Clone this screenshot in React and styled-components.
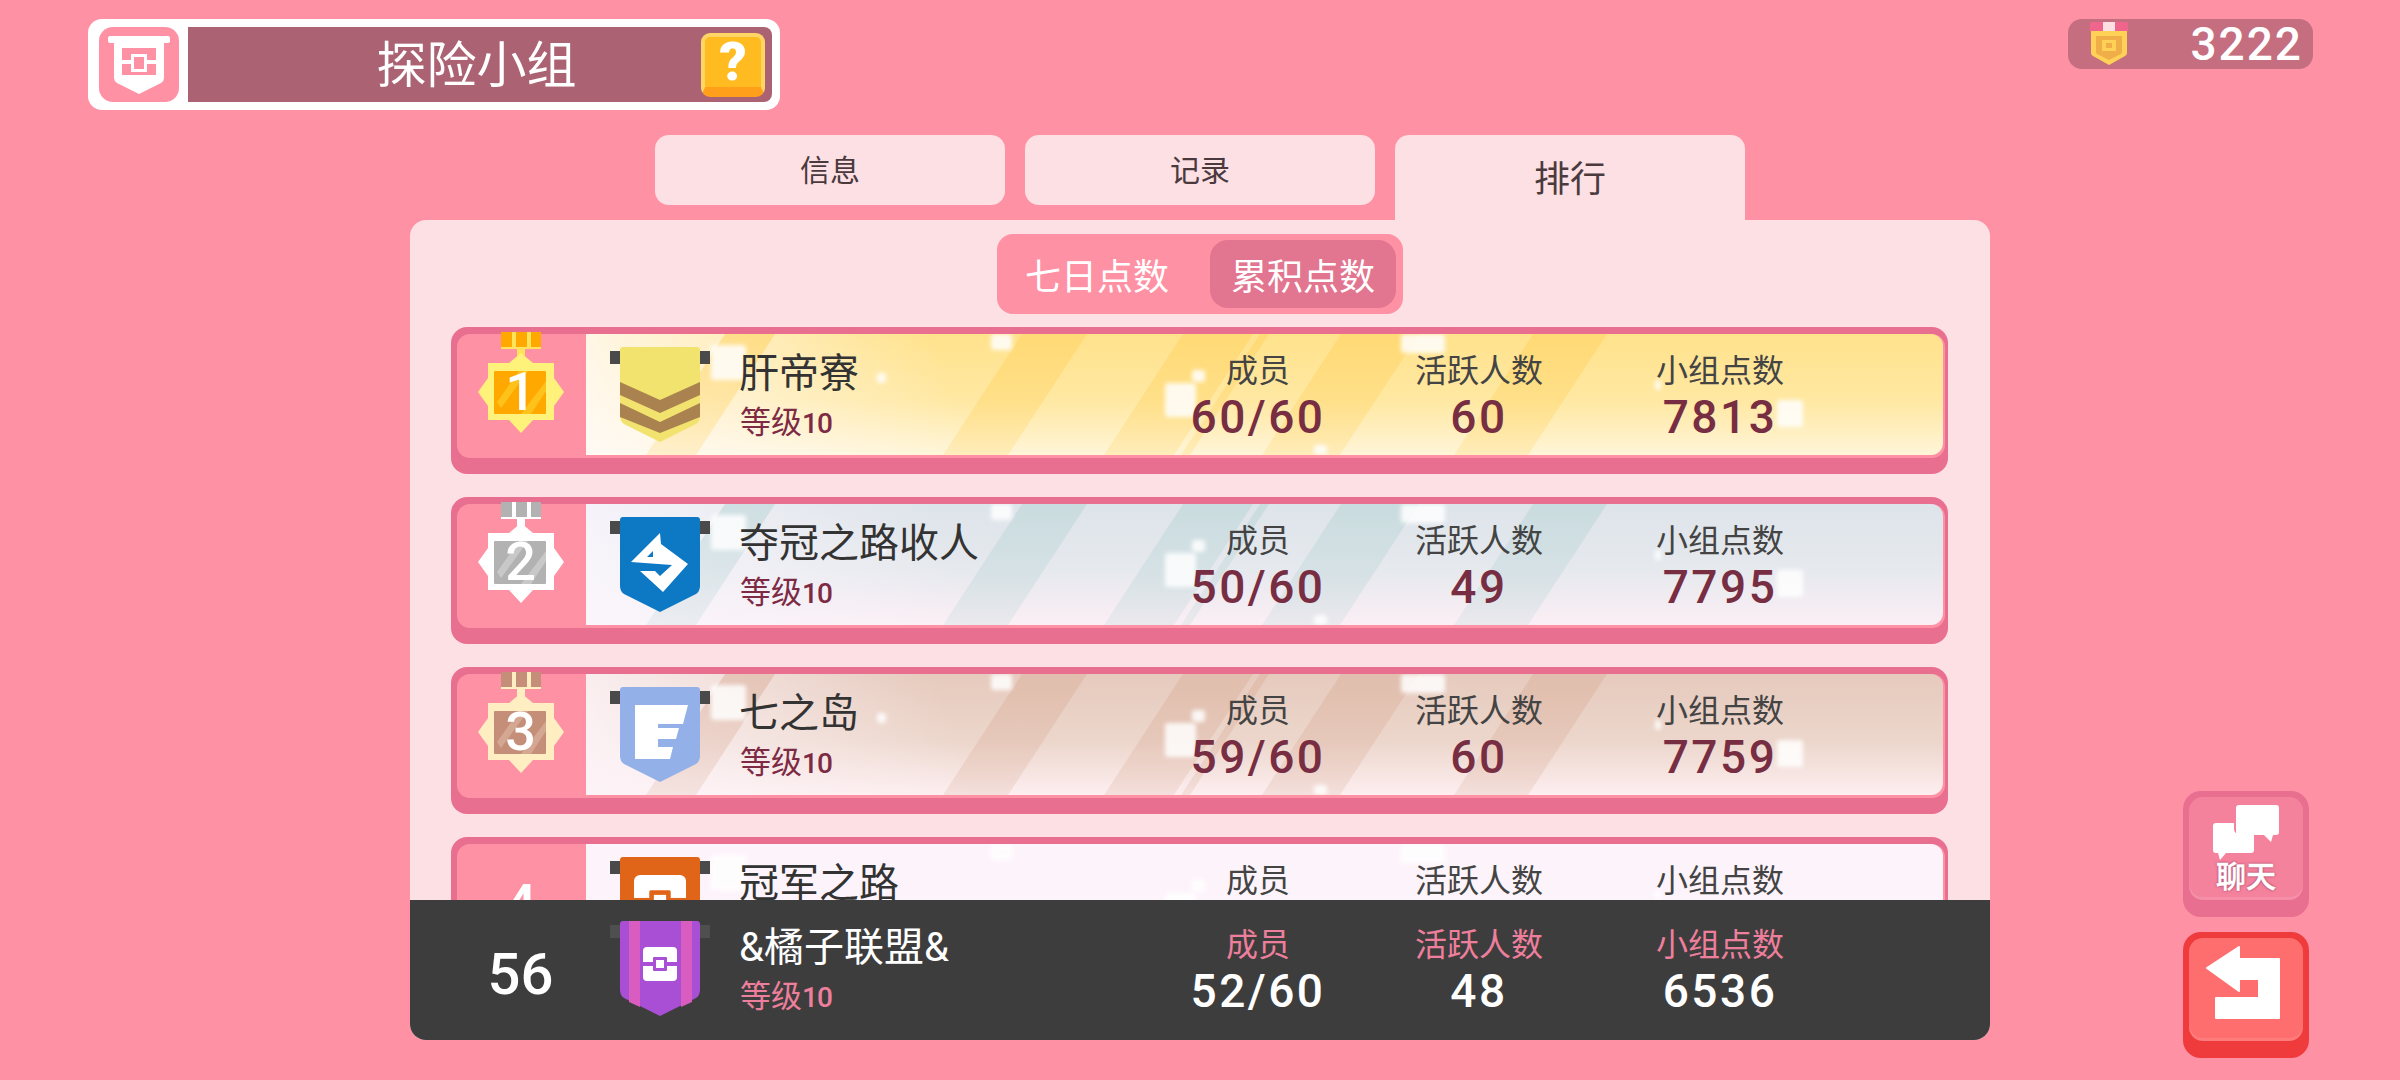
import React from "react";
import styled, { createGlobalStyle } from "styled-components";

const FONT = `Roboto, "Noto Sans CJK SC", sans-serif`;

const GlobalStyle = createGlobalStyle`
  html, body {
    margin: 0;
    padding: 0;
    background: #ff91a4;
    font-family: ${FONT};
  }
  * {
    box-sizing: border-box;
  }
`;

const Page = styled.div`
  width: 2400px;
  height: 1080px;
  overflow: hidden;
  display: grid;
  grid-template-columns: 410px 1580px 1fr;
  grid-template-rows: 135px 945px;
  background: #ff91a4;
`;

const TopBar = styled.div`
  grid-column: 1 / -1;
  display: flex;
  justify-content: space-between;
  align-items: flex-start;
  padding: 19px 87px 0 88px;
`;

const TitleFrame = styled.div`
  width: 692px;
  height: 91px;
  display: flex;
  gap: 9px;
  padding: 8px 8px 8px 11px;
  background: #fff;
  border-radius: 14px;
`;

const TitleIconBox = styled.div`
  width: 80px;
  display: flex;
  align-items: center;
  justify-content: center;
  background: #ff91a4;
  border-radius: 14px;
`;

const TitleBar = styled.div`
  flex: 1;
  display: flex;
  align-items: center;
  justify-content: space-between;
  padding: 0 7px 0 0;
  background: #ab6373;
  border-radius: 0 8px 8px 0;
`;

const TitleText = styled.div`
  flex: 1;
  padding: 2px 0 0 64px;
  text-align: center;
  color: #fff;
  font-size: 50px;
  line-height: 60px;
`;

const HelpButton = styled.div`
  width: 64px;
  height: 64px;
  display: flex;
  align-items: center;
  justify-content: center;
  color: #fff;
  font-size: 54px;
  font-weight: 900;
  line-height: 50px;
  background: #ffbb1f;
  border: 4px solid #ffd666;
  border-bottom: 10px solid #ff9f1a;
  border-radius: 9px;
`;

const Coins = styled.div`
  width: 245px;
  height: 50px;
  display: flex;
  align-items: center;
  justify-content: space-between;
  padding: 0 10px 0 21px;
  color: #fff;
  font-size: 46px;
  font-weight: 500;
  letter-spacing: 2px;
  background: #c56e80;
  border-radius: 14px;
`;

const Center = styled.div`
  grid-column: 2;
`;

const Tabs = styled.div`
  height: 85px;
  display: flex;
  align-items: flex-start;
  gap: 20px;
  padding-left: 245px;
`;

const Tab = styled.div`
  width: 350px;
  height: ${(p) => (p.$active ? 85 : 70)}px;
  display: flex;
  align-items: center;
  justify-content: center;
  padding-bottom: ${(p) => (p.$active ? 3 : 4)}px;
  color: #4a3a3d;
  font-size: ${(p) => (p.$active ? 36 : 30)}px;
  background: #fde0e4;
  border-radius: ${(p) => (p.$active ? "14px 14px 0 0" : "14px")};
`;

const Panel = styled.div`
  height: 820px;
  display: flex;
  flex-direction: column;
  background: #fde0e4;
  border-radius: 16px;
  overflow: hidden;
`;

const Segment = styled.div`
  flex-shrink: 0;
  align-self: center;
  width: 406px;
  height: 80px;
  margin: 14px 0 13px;
  display: flex;
  align-items: center;
  justify-content: space-between;
  padding: 0 7px 0 28px;
  color: #fff;
  font-size: 36px;
  background: #ff91a4;
  border-radius: 16px;
`;

const SegmentActive = styled.div`
  width: 186px;
  height: 68px;
  display: flex;
  align-items: center;
  justify-content: center;
  background: #e2758f;
  border-radius: 18px;
`;

const List = styled.div`
  flex: 1;
  min-height: 0;
  overflow: hidden;
  padding: 0 42px 0 41px;
`;

const Row = styled.div`
  height: 147px;
  margin-bottom: 23px;
  padding: 7px 3px 16px 6px;
  background: #e96f90;
  border-radius: 16px;
`;

const RowInner = styled.div`
  height: 124px;
  display: flex;
  padding: 0 2px 3px 0;
  background: #ff91a4;
  border-radius: 13px;
`;

const RankCell = styled.div`
  flex-shrink: 0;
  width: 129px;
  display: flex;
  align-items: center;
  justify-content: center;
  padding-right: 2px;
  color: #fff;
  font-size: 58px;
  font-weight: 500;
`;

const MedalBox = styled.div`
  position: relative;
  width: 100px;
  height: 110px;
  margin-top: -4px;
  align-self: flex-start;
`;

const MedalDigit = styled.span`
  position: absolute;
  left: 0;
  right: 0;
  top: 33px;
  text-align: center;
  color: #fff;
  font-size: 54px;
  font-weight: 500;
  line-height: 58px;
`;

const Body = styled.div`
  flex: 1;
  position: relative;
  overflow: hidden;
  background: ${(p) => p.$bg};
  border-radius: 0 12px 12px 0;
`;

const SheenLayer = styled.svg`
  position: absolute;
  left: 0;
  top: 0;
`;

const Columns = styled.div`
  position: relative;
  display: grid;
  grid-template-columns: 153px 419px 200px 242px 240px 1fr;
  height: 100%;
`;

const BannerCell = styled.div`
  padding: 13px 0 0 24px;
`;

const NameCell = styled.div`
  padding-top: 15px;
`;

const Name = styled.div`
  color: ${(p) => (p.$dark ? "#fff" : "#333")};
  font-size: 40px;
  line-height: 50px;
  white-space: nowrap;
`;

const Level = styled.div`
  margin-top: 6px;
  padding-left: 1px;
  color: ${(p) => (p.$dark ? "#ee7f9c" : "#7d2a45")};
  font-size: 31px;
  line-height: 36px;
  span {
    font-size: 28px;
    font-weight: 500;
    letter-spacing: -1px;
  }
`;

const Stat = styled.div`
  padding-top: 16px;
  text-align: center;
`;

const StatLabel = styled.div`
  color: ${(p) => (p.$dark ? "#ee7f9c" : "#444")};
  font-size: 32px;
  line-height: 42px;
`;

const StatValue = styled.div`
  color: ${(p) => (p.$dark ? "#fff" : "#772d42")};
  font-size: 46px;
  font-weight: 500;
  letter-spacing: 2.5px;
  line-height: 50px;
`;

const Footer = styled.div`
  flex-shrink: 0;
  height: 140px;
  display: flex;
  padding: 8px 0 0 47px;
  background: #3d3d3d;
`;

const FooterRank = styled(RankCell)`
  height: 132px;
`;

const FooterColumns = styled(Columns)`
  flex: 1;
`;

const Side = styled.div`
  grid-column: 3;
  display: flex;
  flex-direction: column;
  justify-content: flex-end;
  gap: 15px;
  padding: 0 0 22px 193px;
`;

const KeyButton = styled.div`
  width: 126px;
  height: 126px;
  padding: 6px 6px 17px;
  background: ${(p) => (p.$red ? "#ef3b3b" : "#e96f90")};
  border-radius: 18px;
`;

const KeyFace = styled.div`
  position: relative;
  height: 100%;
  background: ${(p) => (p.$red ? "#ff6e6e" : "#f4829d")};
  border-radius: 14px;
  box-shadow: inset 0 -3px 0 rgba(255, 255, 255, 0.1);
`;

const KeyIcon = styled.svg`
  position: absolute;
  left: -6px;
  top: -6px;
`;

const ChatLabel = styled.div`
  position: absolute;
  left: 0;
  right: 0;
  top: 62px;
  text-align: center;
  color: #fff;
  font-size: 30px;
  font-weight: 500;
  line-height: 36px;
  -webkit-text-stroke: 0.5px #fff;
  text-shadow: 0 0 3px #a8486a, 0 0 2px #a8486a;
`;

const GLOWS = [
  [405, 0, 21, 16],
  [125, 11, 35, 35],
  [291, 39, 9, 10],
  [815, 0, 44, 19],
  [579, 49, 31, 34],
  [606, 36, 13, 12],
  [728, 111, 13, 10],
  [1191, 66, 26, 27],
  [1069, 46, 6, 10],
];

const BANDS = [
  [60, 110],
  [357, 422],
  [518, 588],
  [595, 604],
  [676, 754],
  [868, 942],
];

// diagonal streaks and soft white sparkles behind each row
const Sheen = ({ color, id }) => (
  <SheenLayer width="1357" height="121" viewBox="0 0 1357 121">
    <defs>
      <filter id={id} x="-40%" y="-40%" width="180%" height="180%">
        <feGaussianBlur stdDeviation="2" />
      </filter>
      <linearGradient id={`${id}-band`} x1="0" y1="0" x2="0" y2="1">
        <stop offset="0" stopColor={color} stopOpacity="0.6" />
        <stop offset="1" stopColor={color} stopOpacity="0.25" />
      </linearGradient>
    </defs>
    {color &&
      BANDS.map(([a, b]) => (
        <polygon
          key={a}
          points={`${a},121 ${b},121 ${b + 79},0 ${a + 79},0`}
          fill={`url(#${id}-band)`}
        />
      ))}
    {GLOWS.map(([x, y, w, h]) => (
      <rect
        key={x}
        x={x}
        y={y}
        width={w}
        height={h}
        rx="3"
        fill="#fff"
        opacity="0.85"
        filter={`url(#${id})`}
      />
    ))}
  </SheenLayer>
);

const SHIELD =
  "M10 3a3 3 0 0 1 3-3h74a3 3 0 0 1 3 3v66q0 5-4 8L50 95 14 77q-4-3-4-8z";

const Chest = ({ fill, big }) => (
  <g transform={big ? "translate(50 44) scale(1.53) translate(-50 -43)" : undefined}>
    <rect x="33" y="26" width="34" height="34" rx="4" fill="#fff" />
    <rect x="33" y="41" width="34" height="4" fill={fill} />
    <rect x="43" y="36" width="14" height="14" rx="1" fill={fill} />
    <rect x="46" y="39" width="8" height="8" fill="#fff" />
  </g>
);

const Emblem = ({ kind }) => {
  if (kind === "gold") {
    return (
      <>
        <path d={SHIELD} fill="#f2e26e" />
        <path d="M10 35l40 18 40-18v13L50 66 10 48z" fill="#a98250" />
        <path d="M10 56l40 19 40-19v14L50 86 10 70z" fill="#a98250" />
      </>
    );
  }
  if (kind === "silver") {
    return (
      <>
        <path d={SHIELD} fill="#0d78c4" />
        <path
          fillRule="evenodd"
          d="M50 16l1 11 27 20-25 28-23-21h15l5 5 12-11-41-3zM37 40l6-6v6z"
          fill="#fff"
        />
      </>
    );
  }
  if (kind === "bronze") {
    return (
      <>
        <path d={SHIELD} fill="#93b1e8" />
        <path
          d="M25 18h53l-5 19H48v4h21l-3 11H48v8h15l-3 12H25z"
          fill="#fff"
        />
      </>
    );
  }
  if (kind === "orange") {
    return (
      <>
        <path d={SHIELD} fill="#e06518" />
        <Chest fill="#e06518" big />
      </>
    );
  }
  return (
    <>
      <path d={SHIELD} fill="#a94fd6" />
      <path d="M19 0h11v86l-11-5zM71 0h11v81l-11 5z" fill="#d95dc0" />
      <Chest fill="#a94fd6" />
    </>
  );
};

const Banner = ({ kind, rod }) => (
  <svg width="100" height="96" viewBox="0 0 100 96">
    <rect x="0" y="4" width="100" height="13" fill={rod} />
    <Emblem kind={kind} />
  </svg>
);

const Medal = ({ outer, inner, rib, stripe, digit }) => (
  <MedalBox>
    <svg width="100" height="110" viewBox="0 0 100 110">
      <rect x="30" y="2" width="40" height="16" fill={inner} />
      <rect x="41" y="2" width="4" height="15" fill={rib} />
      <rect x="56" y="2" width="4" height="15" fill={rib} />
      <rect x="30" y="17" width="40" height="2" fill={rib} />
      <rect x="46" y="18" width="8" height="10" fill={rib} />
      <path
        d="M50 23l12 10h21v15l10 14-10 14v14H62l-12 13-12-13H17V76L7 62l10-14V33h21z"
        fill={outer}
      />
      <rect x="23" y="41" width="52" height="43" rx="1" fill={inner} />
      <path d="M26 72l22-31h9L30 78zM50 84l25-33v10L60 84z" fill={stripe} />
    </svg>
    <MedalDigit>{digit}</MedalDigit>
  </MedalBox>
);

const CrestIcon = () => (
  <svg width="66" height="62" viewBox="0 0 66 62">
    <path d="M2 4q0-2 2-2h58q2 0 2 2v3q0 2-2 2H4q-2 0-2-2z" fill="#fff" />
    <path
      d="M8 8h50v36q0 3-3 5L33 60 11 49q-3-2-3-5zM16 14v27h34V14z"
      fill="#fff"
      fillRule="evenodd"
    />
    <path d="M16 26h9v-6h16v6h9v4h-9v8H25v-8h-9z" fill="#fff" />
    <rect x="28" y="23" width="10" height="12" fill="#ff91a4" />
  </svg>
);

const CoinIcon = () => (
  <svg width="40" height="44" viewBox="0 0 40 44">
    <rect x="1" y="0" width="38" height="11" rx="2" fill="#f0658c" />
    <rect x="14" y="0" width="12" height="11" fill="#fde0e4" />
    <path d="M2 9h36v22q0 2-2 3L20 43 4 34q-2-1-2-3z" fill="#ffd257" />
    <path d="M7 14h26v16q0 1-1 2l-12 6-12-6q-1-1-1-2z" fill="#f0ae48" />
    <rect x="13" y="18" width="14" height="11" fill="#ffd257" />
    <rect x="17" y="21" width="6" height="5" fill="#f0ae48" />
  </svg>
);

const ChatIcon = () => (
  <KeyIcon width="126" height="70" viewBox="0 0 126 70">
    <path
      d="M56 14h37q3 0 3 3v24q0 3-3 3h-3l-2 7-7-7H56q-3 0-3-3V17q0-3 3-3z"
      fill="#fff"
    />
    <path
      d="M33 32h18v6q0 4 4 5h16v16q0 3-3 3H43l-6 7-2-7h-2q-3 0-3-3V35q0-3 3-3z"
      fill="#fff"
    />
  </KeyIcon>
);

const ReturnIcon = () => (
  <KeyIcon width="126" height="126" viewBox="0 0 126 126">
    <path
      d="M24 36L56 15v12h40v59H33V66h43V47H56v12z"
      fill="#fff"
      stroke="#fff"
      strokeWidth="2"
      strokeLinejoin="round"
    />
  </KeyIcon>
);

const Stats = ({ members, active, points, dark }) => (
  <>
    <Stat>
      <StatLabel $dark={dark}>成员</StatLabel>
      <StatValue $dark={dark}>{members}</StatValue>
    </Stat>
    <Stat>
      <StatLabel $dark={dark}>活跃人数</StatLabel>
      <StatValue $dark={dark}>{active}</StatValue>
    </Stat>
    <Stat>
      <StatLabel $dark={dark}>小组点数</StatLabel>
      <StatValue $dark={dark}>{points}</StatValue>
    </Stat>
  </>
);

const GROUPS = [
  {
    id: "gold",
    name: "肝帝寮",
    members: "60/60",
    active: "60",
    points: "7813",
    bg: "linear-gradient(70deg, rgba(255,250,245,.95), rgba(255,250,245,0) 28%), linear-gradient(to bottom, #ffe28c, #ffe8a2 55%, #fff5d8)",
    stripe: "#ffd466",
    medal: { outer: "#fff27a", inner: "#ffa800", rib: "#ffe35a", stripe: "#ffc21a" },
    digit: "1",
  },
  {
    id: "silver",
    name: "夺冠之路收人",
    members: "50/60",
    active: "49",
    points: "7795",
    bg: "linear-gradient(70deg, rgba(250,246,252,.95), rgba(250,246,252,0) 28%), linear-gradient(to bottom, #dde4ea, #e6e9ee 55%, #fbeff5)",
    stripe: "#bdd6d8",
    medal: { outer: "#fff", inner: "#b2b2b2", rib: "#fff", stripe: "#c8c8c8" },
    digit: "2",
  },
  {
    id: "bronze",
    name: "七之岛",
    members: "59/60",
    active: "60",
    points: "7759",
    bg: "linear-gradient(70deg, rgba(253,244,248,.95), rgba(253,244,248,0) 28%), linear-gradient(to bottom, #e6cabd, #ecd6cb 55%, #fdeef0)",
    stripe: "#ddb5a2",
    medal: { outer: "#ffeec2", inner: "#c48e78", rib: "#ffeec2", stripe: "#d3a792" },
    digit: "3",
  },
  {
    id: "orange",
    name: "冠军之路",
    members: "",
    active: "",
    points: "",
    bg: "#fdf4fb",
    rank: "4",
  },
];

const App = () => (
  <Page>
    <GlobalStyle />
    <TopBar>
      <TitleFrame>
        <TitleIconBox>
          <CrestIcon />
        </TitleIconBox>
        <TitleBar>
          <TitleText>探险小组</TitleText>
          <HelpButton>?</HelpButton>
        </TitleBar>
      </TitleFrame>
      <Coins>
        <CoinIcon />
        3222
      </Coins>
    </TopBar>

    <Center>
      <Tabs>
        <Tab>信息</Tab>
        <Tab>记录</Tab>
        <Tab $active>排行</Tab>
      </Tabs>
      <Panel>
        <Segment>
          七日点数
          <SegmentActive>累积点数</SegmentActive>
        </Segment>
        <List>
          {GROUPS.map((g) => (
            <Row key={g.id}>
              <RowInner>
                <RankCell>
                  {g.medal ? <Medal {...g.medal} digit={g.digit} /> : g.rank}
                </RankCell>
                <Body $bg={g.bg}>
                  <Sheen color={g.stripe} id={`glow-${g.id}`} />
                  <Columns>
                    <BannerCell>
                      <Banner kind={g.id} rod="#4a4a4a" />
                    </BannerCell>
                    <NameCell>
                      <Name>{g.name}</Name>
                      <Level>
                        等级<span>10</span>
                      </Level>
                    </NameCell>
                    <Stats
                      members={g.members}
                      active={g.active}
                      points={g.points}
                    />
                  </Columns>
                </Body>
              </RowInner>
            </Row>
          ))}
        </List>
        <Footer>
          <FooterRank>56</FooterRank>
          <FooterColumns>
            <BannerCell>
              <Banner kind="purple" rod="#4f4f4f" />
            </BannerCell>
            <NameCell>
              <Name $dark>&橘子联盟&</Name>
              <Level $dark>
                等级<span>10</span>
              </Level>
            </NameCell>
            <Stats members="52/60" active="48" points="6536" dark />
          </FooterColumns>
        </Footer>
      </Panel>
    </Center>

    <Side>
      <KeyButton>
        <KeyFace>
          <ChatIcon />
          <ChatLabel>聊天</ChatLabel>
        </KeyFace>
      </KeyButton>
      <KeyButton $red>
        <KeyFace $red>
          <ReturnIcon />
        </KeyFace>
      </KeyButton>
    </Side>
  </Page>
);

export default App;
